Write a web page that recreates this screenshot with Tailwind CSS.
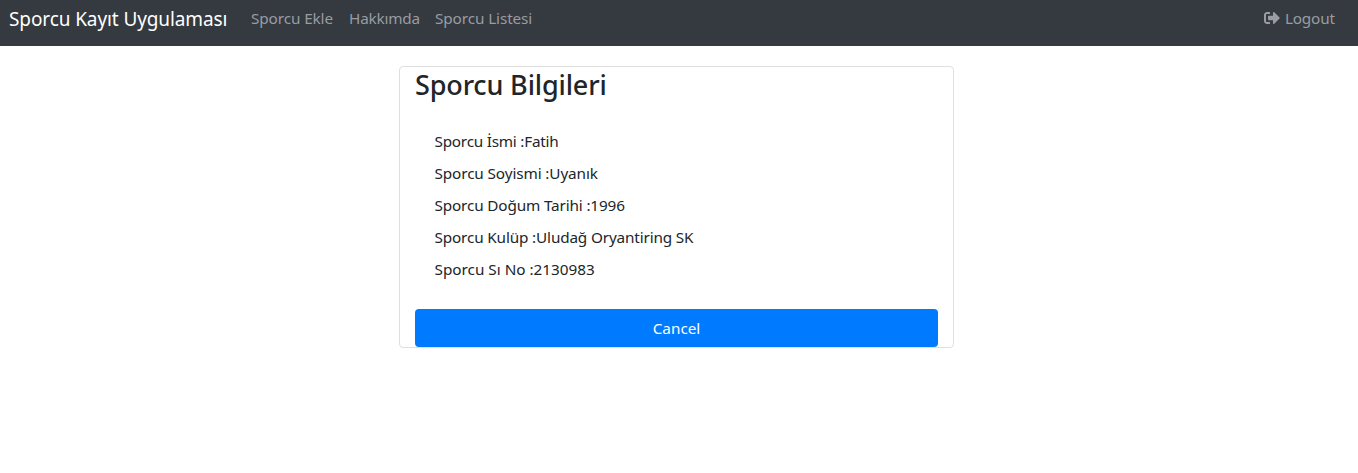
<!DOCTYPE html>
<html lang="tr">
<head>
<meta charset="utf-8">
<title>Sporcu Kayıt Uygulaması</title>
<script src="https://cdn.jsdelivr.net/npm/@tailwindcss/browser@4"></script>
</head>
<body class="bg-white text-[#212529] text-[15.3px] leading-6 font-['Noto_Sans','Open_Sans',sans-serif]">
<nav class="flex h-[46px] items-start bg-[#343a40] pl-[9px] pr-[23px] pt-[6px] text-[#999ca0] whitespace-nowrap">
  <a class="w-[242px] pt-px text-[19px] tracking-[-0.1px] text-white">Sporcu Kayıt Uygulaması</a>
  <a class="w-[98px] tracking-[-0.1px]">Sporcu Ekle</a>
  <a class="w-[86px] tracking-[-0.2px]">Hakkımda</a>
  <a class="tracking-[-0.1px]">Sporcu Listesi</a>
  <a class="ml-auto flex"><svg class="mt-1 mr-[5px] size-4" viewBox="0 0 512 512" fill="currentColor"><path d="M497 273L329 441c-15 15-41 4.500-41-17v-96H152c-13.300 0-24-10.700-24-24v-96c0-13.300 10.700-24 24-24h136V88c0-21.400 25.900-32 41-17l168 168c9.300 9.400 9.300 24.600 0 34zM192 436v-40c0-6.600-5.400-12-12-12H96c-17.700 0-32-14.300-32-32V160c0-17.700 14.300-32 32-32h84c6.600 0 12-5.400 12-12V76c0-6.600-5.400-12-12-12H96c-53 0-96 43-96 96v192c0 53 43 96 96 96h84c6.600 0 12-5.400 12-12z"/></svg><span class="w-[50px] tracking-[-0.2px]">Logout</span></a>
</nav>
<main class="mt-5 ml-[399px] h-[282px] w-[555px] rounded border border-[#dfdfdf] px-[15px]">
  <h2 class="text-[27px] leading-9 font-medium tracking-[-0.15px]">Sporcu Bilgileri</h2>
  <div class="mt-[26px] flex flex-col gap-2 pl-[19.500px]">
    <p class="tracking-[-0.23px]">Sporcu İsmi :Fatih</p>
    <p class="tracking-[-0.11px]">Sporcu Soyismi :Uyanık</p>
    <p class="tracking-[-0.15px]">Sporcu Doğum Tarihi :1996</p>
    <p class="tracking-[-0.15px]">Sporcu Kulüp :Uludağ Oryantiring SK</p>
    <p>Sporcu Sı No :2130983</p>
  </div>
  <button class="mt-[28px] block h-[38px] w-full rounded bg-[#007bff] text-white">Cancel</button>
</main>
</body>
</html>
